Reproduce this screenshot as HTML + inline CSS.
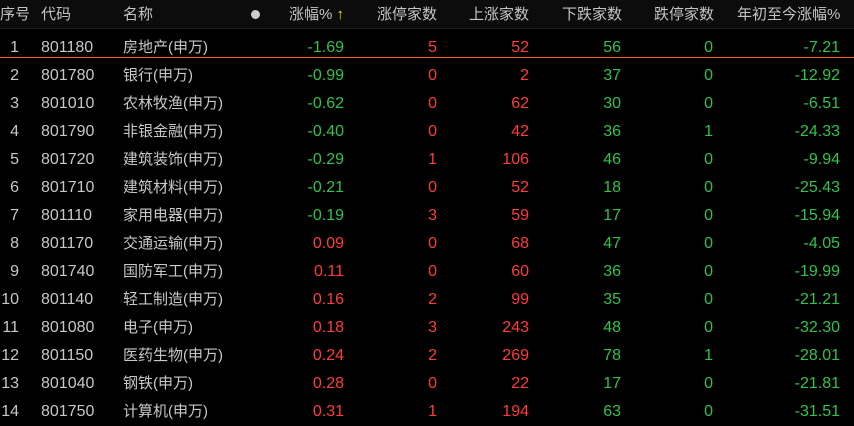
<!DOCTYPE html>
<html><head><meta charset="utf-8"><style>
body{margin:0;width:854px;height:424px;background:#000;overflow:hidden;font-family:"Liberation Sans","Noto Sans CJK SC",sans-serif;font-size:15px;color:#c8c8c8;position:relative}
.hd{position:absolute;left:0;top:0;width:854px;height:28px;background:#0c0c0c;border-bottom:1px solid #1e1e1e}
.r{position:absolute;left:0;width:854px;height:28px;line-height:28px}
.c{position:absolute;white-space:nowrap}
.n{font-size:16px}
.g{color:#2fc24e}.d{color:#ff3b3b}
</style></head><body>
<div class="hd"></div>
<div class="r" style="top:1px;color:#c4c4c4">
<span class="c" style="left:0">序号</span><span class="c" style="left:41px">代码</span><span class="c" style="left:123px">名称</span>
<span class="c" style="left:251px;top:9px;width:9px;height:9px;border-radius:50%;background:#ccc;line-height:0"></span>
<span class="c" style="left:289px">涨幅% <span style="color:#e8e800">↑</span></span>
<span class="c" style="left:377px">涨停家数</span><span class="c" style="left:469px">上涨家数</span><span class="c" style="left:562px">下跌家数</span><span class="c" style="left:654px">跌停家数</span><span class="c" style="left:737px">年初至今涨幅%</span>
</div>
<div id="rows"></div>
<div style="position:absolute;left:0;top:57px;width:854px;height:1px;background:#ff5a1a;z-index:5"></div>
<script>
var d=[["801180","房地产(申万)","-1.69",5,52,56,0,"-7.21"],["801780","银行(申万)","-0.99",0,2,37,0,"-12.92"],["801010","农林牧渔(申万)","-0.62",0,62,30,0,"-6.51"],["801790","非银金融(申万)","-0.40",0,42,36,1,"-24.33"],["801720","建筑装饰(申万)","-0.29",1,106,46,0,"-9.94"],["801710","建筑材料(申万)","-0.21",0,52,18,0,"-25.43"],["801110","家用电器(申万)","-0.19",3,59,17,0,"-15.94"],["801170","交通运输(申万)","0.09",0,68,47,0,"-4.05"],["801740","国防军工(申万)","0.11",0,60,36,0,"-19.99"],["801140","轻工制造(申万)","0.16",2,99,35,0,"-21.21"],["801080","电子(申万)","0.18",3,243,48,0,"-32.30"],["801150","医药生物(申万)","0.24",2,269,78,1,"-28.01"],["801040","钢铁(申万)","0.28",0,22,17,0,"-21.81"],["801750","计算机(申万)","0.31",1,194,63,0,"-31.51"]];
var h="";
d.forEach(function(r,i){var t=34+i*28;var pc=r[2][0]=="-"?"g":"d";
function R(x,v,c){return '<span class="c n '+c+'" style="right:'+(854-x)+'px">'+v+'</span>';}
h+='<div class="r" style="top:'+t+'px"><span class="c n" style="right:'+(854-19)+'px">'+(i+1)+'</span><span class="c n" style="left:41px">'+r[0]+'</span><span class="c" style="left:123px">'+r[1]+'</span>'+R(344,r[2],pc)+R(437,r[3],"d")+R(529,r[4],"d")+R(621,r[5],"g")+R(713,r[6],"g")+R(840,r[7],"g")+'</div>';});
document.getElementById("rows").innerHTML=h;
</script>
</body></html>
